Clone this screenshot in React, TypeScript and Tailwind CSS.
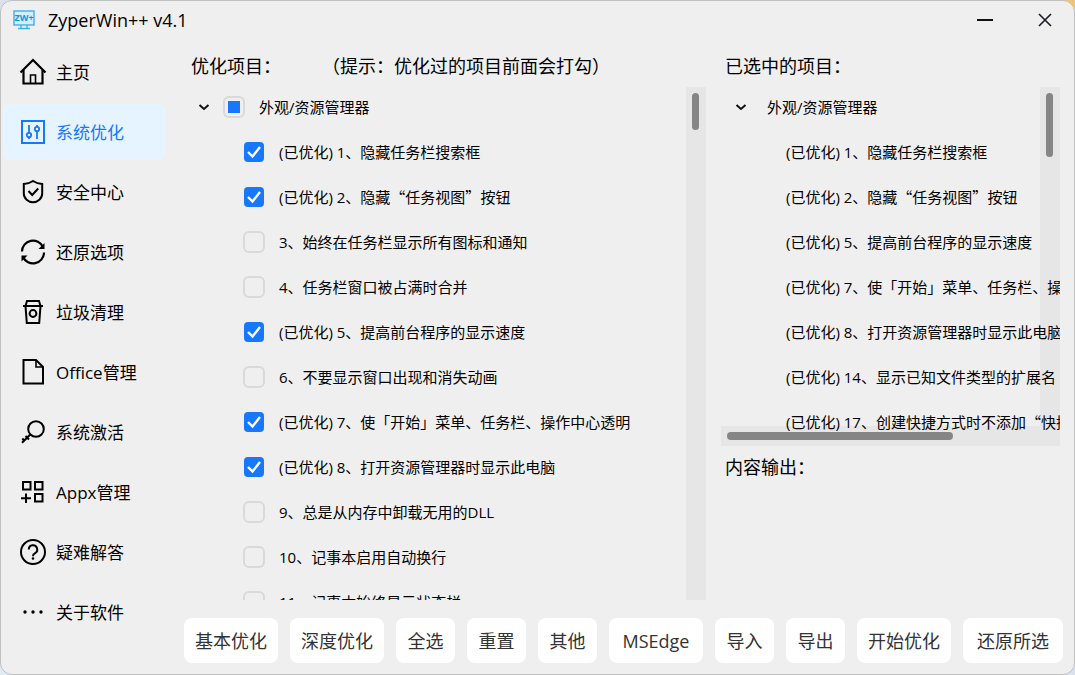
import React, { useState } from "react"

interface NavItem {
  label: string
  icon: React.ReactNode
}

interface OptionItem {
  label: string
  checked: boolean
}

const line = {
  fill: "none",
  stroke: "currentColor",
  strokeWidth: 2,
}

const navItems: NavItem[] = [
  {
    label: "主页",
    icon: (
      <g {...line} strokeWidth={2.2}>
        <path d="M1.5 14.5 14 2l12.500 12.500" />
        <path d="M4.500 12v13.500h19V12" />
        <path d="M11.500 25v-8h5v8" strokeWidth={1.6} />
      </g>
    ),
  },
  {
    label: "系统优化",
    icon: (
      <g {...line}>
        <rect x="3" y="3" width="22" height="22" />
        <path d="M10 7v8M10 19v2M18 7v2M18 13v8" strokeWidth={1.8} />
        <circle cx="10" cy="17" r="2.200" strokeWidth={1.8} />
        <circle cx="18" cy="11" r="2.200" strokeWidth={1.8} />
      </g>
    ),
  },
  {
    label: "安全中心",
    icon: (
      <g {...line}>
        <path d="M14 3c3 2 6 2.700 9.200 3v9.500c0 5-4.500 8.700-9.200 8.700s-9.200-3.700-9.200-8.700V6C8 5.700 11 5 14 3z" />
        <path d="m9.500 13 3.700 4 6-6.500" />
      </g>
    ),
  },
  {
    label: "还原选项",
    icon: (
      <g {...line} strokeWidth={2.2}>
        <path d="M3 13.500A11 11 0 0 1 24 9" />
        <path d="M25 14.500A11 11 0 0 1 4 19" />
        <path d="M25.500 5v6h-6z" fill="currentColor" stroke="none" />
        <path d="M2.500 23.500v-6h6z" fill="currentColor" stroke="none" />
      </g>
    ),
  },
  {
    label: "垃圾清理",
    icon: (
      <g {...line}>
        <path d="M4 8h20M6.500 8 8 3h12l1.500 5M6.500 8l1.300 17h12.400l1.300-17" />
        <circle cx="14" cy="15.500" r="3.400" />
      </g>
    ),
  },
  {
    label: "Office管理",
    icon: (
      <g {...line}>
        <path d="M4.500 2H17l7 7v16.500H4.500z" />
        <path d="M17 2.500V9h7" strokeWidth={1.6} />
      </g>
    ),
  },
  {
    label: "系统激活",
    icon: (
      <g {...line}>
        <circle cx="17" cy="11" r="7.800" />
        <path d="m11.300 16.500-8.300 8.300M6.500 18l3.500 3.500M3.300 20.500l2.700 2.700" />
      </g>
    ),
  },
  {
    label: "Appx管理",
    icon: (
      <g {...line}>
        <path d="M4 4h7.500v7.500H4zM16 4h7.500v7.500H16zM16 16h7.500v7.500H16z" />
        <path d="M7 15.500V25M2 20.200h10" />
      </g>
    ),
  },
  {
    label: "疑难解答",
    icon: (
      <g {...line}>
        <circle cx="14" cy="14" r="12" />
        <path d="M9.800 11.500a4.200 4.200 0 1 1 6 3.800c-1.300.7-1.800 1.300-1.800 2.900" />
        <circle cx="14" cy="20.500" r="1.300" fill="currentColor" stroke="none" />
      </g>
    ),
  },
  {
    label: "关于软件",
    icon: (
      <g fill="currentColor">
        <circle cx="6" cy="14" r="1.700" />
        <circle cx="14" cy="14" r="1.700" />
        <circle cx="22" cy="14" r="1.700" />
      </g>
    ),
  },
]

const options: OptionItem[] = [
  { label: "(已优化) 1、隐藏任务栏搜索框", checked: true },
  { label: "(已优化) 2、隐藏“任务视图”按钮", checked: true },
  { label: "3、始终在任务栏显示所有图标和通知", checked: false },
  { label: "4、任务栏窗口被占满时合并", checked: false },
  { label: "(已优化) 5、提高前台程序的显示速度", checked: true },
  { label: "6、不要显示窗口出现和消失动画", checked: false },
  { label: "(已优化) 7、使「开始」菜单、任务栏、操作中心透明", checked: true },
  { label: "(已优化) 8、打开资源管理器时显示此电脑", checked: true },
  { label: "9、总是从内存中卸载无用的DLL", checked: false },
  { label: "10、记事本启用自动换行", checked: false },
  { label: "11、记事本始终显示状态栏", checked: false },
]

const selected = [
  "(已优化) 1、隐藏任务栏搜索框",
  "(已优化) 2、隐藏“任务视图”按钮",
  "(已优化) 5、提高前台程序的显示速度",
  "(已优化) 7、使「开始」菜单、任务栏、操作中心透明",
  "(已优化) 8、打开资源管理器时显示此电脑",
  "(已优化) 14、显示已知文件类型的扩展名",
  "(已优化) 17、创建快捷方式时不添加“快捷方式”文字",
]

const actions = [
  { label: "基本优化", width: "min-w-[94px]" },
  { label: "深度优化", width: "min-w-[94px]" },
  { label: "全选", width: "min-w-[59px]" },
  { label: "重置", width: "min-w-[59px]" },
  { label: "其他", width: "min-w-[59px]" },
  { label: "MSEdge", width: "min-w-[94px]" },
  { label: "导入", width: "min-w-[59px]" },
  { label: "导出", width: "min-w-[59px]" },
  { label: "开始优化", width: "min-w-[94px]" },
  { label: "还原所选", width: "min-w-[100px]" },
]

const Chevron = () => (
  <svg viewBox="0 0 12 12" className="size-3 shrink-0">
    <path d="m1.500 4 4.500 4 4.500-4" fill="none" stroke="#111" strokeWidth="2" />
  </svg>
)

const Logo = () => (
  <svg viewBox="0 0 22 20" className="h-5 w-[22px]">
    <rect x="1" y="1" width="20" height="14" fill="#d3eefb" stroke="#41b0e8" strokeWidth="1.400" />
    <path d="M8 15v3M14 15v3M5 18.500h12" stroke="#41b0e8" strokeWidth="1.400" />
    <text
      x="11"
      y="11"
      textAnchor="middle"
      fontSize="9"
      fontWeight="700"
      fontFamily="Open Sans, sans-serif"
      fill="#1296db"
    >
      ZW+
    </text>
  </svg>
)

// Curly quotes take the full-width CJK glyph, the rest keeps the Latin face
const CjkText = ({ text }: { text: string }) => (
  <>
    {text.split(/([“”])/).map((part, i) =>
      part === "“" || part === "”" ? (
        <span key={i} className="font-['Noto_Sans_CJK_SC',sans-serif] leading-none">
          {part}
        </span>
      ) : (
        part
      )
    )}
  </>
)

const CheckBox = ({
  id,
  checked,
  onChange,
}: {
  id: string
  checked: boolean
  onChange: () => void
}) => (
  <span className="relative flex size-[22px] shrink-0 items-center justify-center">
    <input
      id={id}
      type="checkbox"
      checked={checked}
      onChange={onChange}
      className="size-[22px] appearance-none rounded-md border-2 border-[#d9d9d9] checked:size-5 checked:rounded-sm checked:border-0 checked:bg-[#1677ff]"
    />
    {checked && (
      <svg viewBox="0 0 22 22" className="pointer-events-none absolute inset-0">
        <path d="m5 11 4.500 4.500L17 6" fill="none" stroke="#fff" strokeWidth="2.400" />
      </svg>
    )}
  </span>
)

export default function App() {
  const [active, setActive] = useState("系统优化")
  const [items, setItems] = useState(options)

  const toggle = (index: number) => {
    setItems(items.map((it, i) => (i === index ? { ...it, checked: !it.checked } : it)))
  }

  return (
    <div
      lang="zh-CN"
      className="h-screen bg-[linear-gradient(to_bottom_left,#edc478,#d5dbe6_15%,#e4ebf5)] font-['Open_Sans','Noto_Sans_CJK_SC',sans-serif] font-[380] text-black"
    >
      <div className="flex h-full flex-col overflow-hidden rounded-xl border border-[#c0c0c0] bg-[#efefef]">
        <header className="flex h-[38px] shrink-0 items-center pl-3 pr-[13px]">
          <Logo />
          <h1 className="ml-[13px] text-lg font-[380]">ZyperWin++ v4.1</h1>
          <div className="ml-auto flex gap-7">
            <button aria-label="最小化" className="flex size-8 items-center justify-center">
              <svg viewBox="0 0 16 16" className="size-4">
                <path d="M0 8h16" stroke="#111" strokeWidth="2" />
              </svg>
            </button>
            <button aria-label="关闭" className="flex size-8 items-center justify-center">
              <svg viewBox="0 0 16 16" className="size-4">
                <path d="m2 2 12 12M14 2 2 14" stroke="#1b1b24" strokeWidth="1.600" />
              </svg>
            </button>
          </div>
        </header>

        <div className="flex min-h-0 flex-1">
          <nav className="flex w-[165px] shrink-0 flex-col gap-1 pl-0.5 pt-[5px]">
            {navItems.map((item) => (
              <button
                key={item.label}
                onClick={() => setActive(item.label)}
                className={
                  item.label === active
                    ? "flex h-14 shrink-0 items-center gap-[9px] rounded-lg bg-[#e6f4ff] pl-4 text-[17px] text-[#1677ff]"
                    : "flex h-14 shrink-0 items-center gap-[9px] rounded-lg pl-4 text-[17px]"
                }
              >
                <svg viewBox="0 0 28 28" className="size-7 shrink-0">
                  {item.icon}
                </svg>
                <span className="pt-0.5">{item.label}</span>
              </button>
            ))}
          </nav>

          <main className="flex min-w-0 flex-1 flex-col pb-[11px] pl-[18px] pr-[11px] pt-0.5">
            <div className="flex min-h-0 flex-1 gap-[15px]">
              <section className="flex min-w-0 flex-1 flex-col">
                <h2 className="flex h-[46px] shrink-0 items-center gap-[41px] pl-[7px] pt-1 text-lg font-[380]">
                  <span>优化项目：</span>
                  <span>（提示：优化过的项目前面会打勾）</span>
                </h2>
                <div className="flex min-h-0 flex-1">
                  <ul className="-mt-[3px] min-w-0 flex-1 overflow-hidden text-[15px]">
                    <li className="flex h-[45px] items-center pl-3.5">
                      <Chevron />
                      <span className="relative ml-[13px] size-[22px] shrink-0">
                        <input
                          id="group"
                          type="checkbox"
                          className="block size-[22px] appearance-none rounded-md border-2 border-[#d9d9d9]"
                        />
                        <span className="pointer-events-none absolute inset-[5px] bg-[#1677ff]" />
                      </span>
                      <label htmlFor="group" className="ml-3.5 pt-0.5">
                        外观/资源管理器
                      </label>
                    </li>
                    {items.map((item, i) => (
                      <li key={item.label} className="flex h-[45px] items-center gap-3.5 pl-[59px]">
                        <CheckBox id={`opt-${i}`} checked={item.checked} onChange={() => toggle(i)} />
                        <label htmlFor={`opt-${i}`} className="whitespace-nowrap pt-0.5">
                          <CjkText text={item.label} />
                        </label>
                      </li>
                    ))}
                  </ul>
                  <div className="w-5 shrink-0 bg-[#e6e6e6] px-1.5 pt-1.5">
                    <div className="h-[37px] w-[7px] rounded-full bg-[#858585]" />
                  </div>
                </div>
              </section>

              <section className="flex w-[342px] shrink-0 flex-col">
                <h2 className="flex h-[46px] shrink-0 items-center pl-1 pt-1 text-lg font-[380]">
                  已选中的项目：
                </h2>
                <div className="relative mr-[3px] h-[359px] shrink-0 overflow-hidden">
                  <div className="absolute inset-y-0 right-0 w-5 bg-[#e6e6e6] px-1.5 pt-1.5">
                    <div className="h-16 w-[7px] rounded-full bg-[#858585]" />
                  </div>
                  <div className="absolute inset-x-0 bottom-0 h-5 bg-[#e6e6e6] px-1.5 pt-1.5">
                    <div className="h-2 w-[69%] rounded-full bg-[#858585]" />
                  </div>
                  <ul className="relative -mt-[3px] text-[15px]">
                    <li className="flex h-[45px] items-center gap-5 pl-3.5">
                      <Chevron />
                      <span className="pt-0.5">外观/资源管理器</span>
                    </li>
                    {selected.map((label) => (
                      <li key={label} className="flex h-[45px] items-center whitespace-nowrap pl-[65px]">
                        <span className="pt-0.5">
                          <CjkText text={label} />
                        </span>
                      </li>
                    ))}
                  </ul>
                </div>
                <h2 className="flex h-[42px] shrink-0 items-center pl-1 text-lg font-[380]">
                  内容输出：
                </h2>
              </section>
            </div>

            <div className="mt-[18px] flex shrink-0 gap-3">
              {actions.map(({ label, width }) => (
                <button
                  key={label}
                  className={`${width} h-[45px] flex-auto whitespace-nowrap rounded-lg bg-white px-2.5 text-lg text-[#333]`}
                >
                  {label}
                </button>
              ))}
            </div>
          </main>
        </div>
      </div>
    </div>
  )
}
